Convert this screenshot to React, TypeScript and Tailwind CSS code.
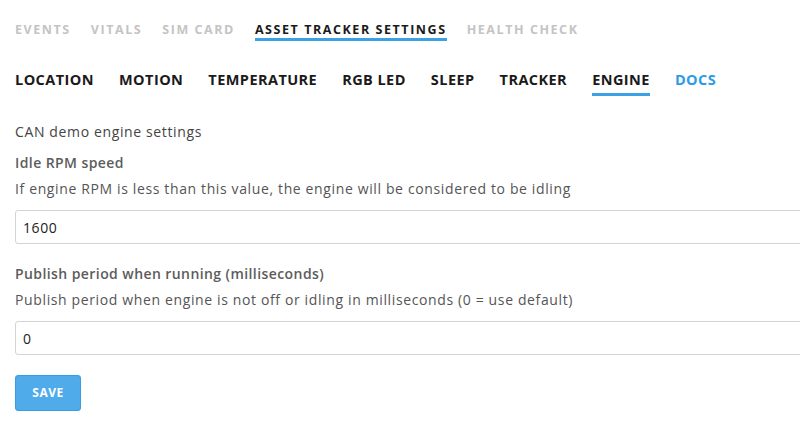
import React, { useState } from 'react';

const topTabs = ['EVENTS', 'VITALS', 'SIM CARD', 'ASSET TRACKER SETTINGS', 'HEALTH CHECK'];
const subTabs = ['LOCATION', 'MOTION', 'TEMPERATURE', 'RGB LED', 'SLEEP', 'TRACKER', 'ENGINE', 'DOCS'];

const Field: React.FC<{ label: string; help: string; value: string }> = ({ label, help, value }) => {
  const [val, setVal] = useState(value);
  return (
    <div>
      <div className="text-[14px] font-semibold text-[#5c5c5c] leading-[20px] tracking-[0.03em]">{label}</div>
      <div className="mt-[6px] text-[14px] text-[#555] leading-[20px] tracking-[0.045em]">{help}</div>
      <input
        value={val}
        onChange={(e) => setVal(e.target.value)}
        className="mt-[11px] block w-[800px] h-[34px] pl-[7px] border border-[#d4d4d4] rounded-[3px] text-[14px] text-[#222] tracking-[0.04em] outline-none"
      />
    </div>
  );
};

const App: React.FC = () => {
  return (
    <div className="w-[800px] h-[433px] overflow-hidden bg-white pl-[15px] font-['Open_Sans',sans-serif]">
      {/* top tabs */}
      <div className="flex gap-[20px] pt-[22px]">
        {topTabs.map((t) => {
          const active = t === 'ASSET TRACKER SETTINGS';
          return (
            <div
              key={t}
              className={
                'pb-[1px] border-b-[3px] text-[12.5px] font-bold tracking-[0.125em] leading-[15px] ' +
                (active ? 'border-[#3aa1e4] text-[#1a1a1a]' : 'border-transparent text-[#c4c4c4]')
              }
            >
              {t}
            </div>
          );
        })}
      </div>

      {/* engine sub tabs */}
      <div className="flex gap-[25px] mt-[30px]">
        {subTabs.map((t) => {
          const active = t === 'ENGINE';
          const docs = t === 'DOCS';
          return (
            <div
              key={t}
              className={
                'pb-[4px] border-b-[3px] text-[14.5px] font-bold tracking-[0.03em] leading-[18px] ' +
                (active
                  ? 'border-[#3aa1e4] text-[#1a1a1a]'
                  : docs
                  ? 'border-transparent text-[#2b9ce6]'
                  : 'border-transparent text-[#1a1a1a]')
              }
            >
              {t}
            </div>
          );
        })}
      </div>

      <div className="mt-[26px] text-[14px] text-[#444] leading-[20px] tracking-[0.045em]">CAN demo engine settings</div>

      <div className="mt-[11px]">
        <Field
          label="Idle RPM speed"
          help="If engine RPM is less than this value, the engine will be considered to be idling"
          value="1600"
        />
      </div>

      <div className="mt-[20px]">
        <Field
          label="Publish period when running (milliseconds)"
          help="Publish period when engine is not off or idling in milliseconds (0 = use default)"
          value="0"
        />
      </div>

      <button className="mt-[20px] w-[66px] h-[36px] rounded-[3px] bg-[#4fabea] border border-[#3b9be0] text-white text-[12px] font-bold tracking-[0.04em]">
        SAVE
      </button>
    </div>
  );
};

export default App;
